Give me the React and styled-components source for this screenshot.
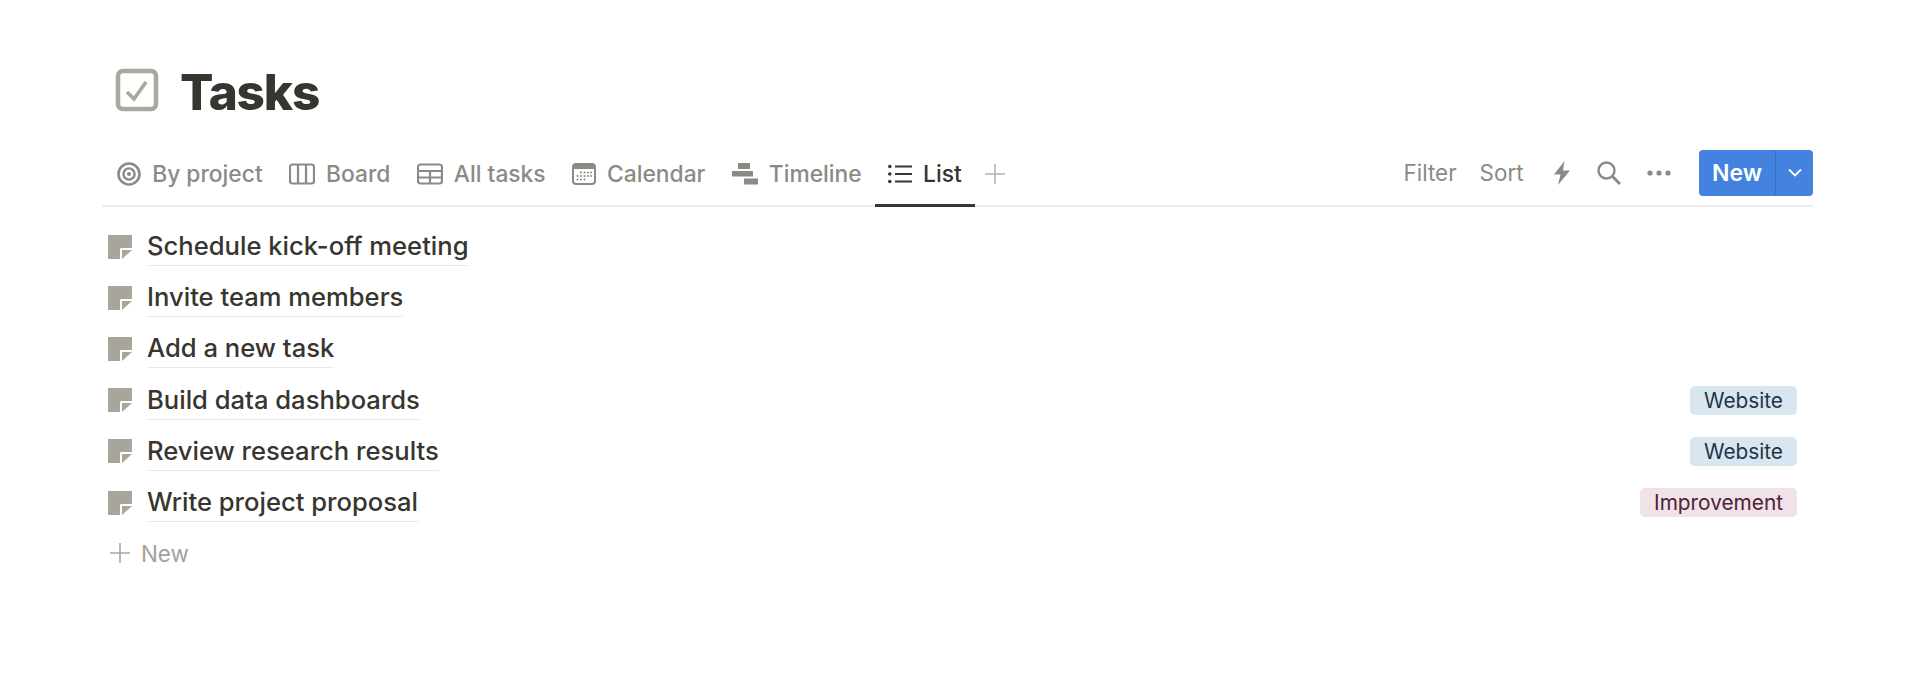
import styled, { createGlobalStyle } from "styled-components";

const GlobalStyle = createGlobalStyle`
  html, body {
    margin: 0;
    background: #fff;
    font-family: Inter, "Liberation Sans", sans-serif;
  }
`;

const tabs = [
  { label: "By project", icon: "target" },
  { label: "Board", icon: "board" },
  { label: "All tasks", icon: "table" },
  { label: "Calendar", icon: "calendar" },
  { label: "Timeline", icon: "timeline" },
  { label: "List", icon: "list", active: true },
];

const rows = [
  { title: "Schedule kick-off meeting" },
  { title: "Invite team members" },
  { title: "Add a new task" },
  { title: "Build data dashboards", tag: "Website", tone: "blue" },
  { title: "Review research results", tag: "Website", tone: "blue" },
  { title: "Write project proposal", tag: "Improvement", tone: "pink" },
];

const TabIcon = ({ name }) => {
  if (name === "target") {
    return (
      <svg width="24" height="24" viewBox="0 0 24 24" fill="none" stroke="currentColor">
        <circle cx="12" cy="12" r="10.5" strokeWidth="2.6" />
        <circle cx="12" cy="12" r="5.6" strokeWidth="2.4" />
        <circle cx="12" cy="12" r="2" fill="currentColor" stroke="none" />
      </svg>
    );
  }
  if (name === "board") {
    return (
      <svg width="26" height="22" viewBox="0 0 26 22" fill="none" stroke="currentColor" strokeWidth="2.2">
        <rect x="1" y="1.5" width="24" height="19" rx="2.5" />
        <path d="M9 1.5v19M17 1.5v19" />
      </svg>
    );
  }
  if (name === "table") {
    return (
      <svg width="26" height="22" viewBox="0 0 26 22" fill="none" stroke="currentColor" strokeWidth="2.2">
        <rect x="1" y="1.5" width="24" height="19" rx="2.5" />
        <path d="M1 8h24M1 14.5h24M13 8v12.5" />
      </svg>
    );
  }
  if (name === "calendar") {
    return (
      <svg width="24" height="22" viewBox="0 0 24 22">
        <rect x="1" y="1" width="22" height="20" rx="3" fill="none" stroke="currentColor" strokeWidth="2" />
        <path d="M1 6V4a3 3 0 0 1 3-3h16a3 3 0 0 1 3 3v2z" fill="currentColor" />
        <g fill="currentColor">
          <circle cx="9" cy="9.5" r="1" /><circle cx="12.5" cy="9.5" r="1" /><circle cx="16" cy="9.5" r="1" /><circle cx="19" cy="9.5" r="1" />
          <circle cx="5.5" cy="13" r="1" /><circle cx="9" cy="13" r="1" /><circle cx="12.5" cy="13" r="1" /><circle cx="16" cy="13" r="1" /><circle cx="19" cy="13" r="1" />
          <circle cx="5.5" cy="16.5" r="1" /><circle cx="9" cy="16.5" r="1" /><circle cx="12.5" cy="16.5" r="1" />
        </g>
      </svg>
    );
  }
  if (name === "timeline") {
    return (
      <svg width="26" height="22" viewBox="0 0 26 22" fill="currentColor">
        <rect x="6" y="0" width="12" height="6" rx="0.5" />
        <rect x="0" y="8" width="21" height="5.5" rx="0.5" />
        <rect x="12" y="15.5" width="14" height="6" rx="0.5" />
      </svg>
    );
  }
  return (
    <svg width="24" height="20" viewBox="0 0 24 20" fill="currentColor">
      <circle cx="1.8" cy="2.5" r="1.8" />
      <circle cx="1.8" cy="10" r="1.8" />
      <circle cx="1.8" cy="17.5" r="1.8" />
      <rect x="7" y="1.5" width="17" height="2" />
      <rect x="7" y="9" width="17" height="2" />
      <rect x="7" y="16.5" width="17" height="2" />
    </svg>
  );
};

const NoteIcon = () => (
  <svg width="24" height="24" viewBox="0 0 24 24">
    <path d="M0 0h24v13H13a1 1 0 0 0-1 1v10H0z" fill="#a8a59b" />
    <path d="M14 15h10L14 24z" fill="#a8a59b" />
  </svg>
);

const Plus = ({ size, color }) => (
  <svg width={size} height={size} viewBox="0 0 20 20" stroke={color} strokeWidth="1.6">
    <path d="M10 0v20M0 10h20" />
  </svg>
);

export default function App() {
  return (
    <Page>
      <GlobalStyle />
      <Header>
        <svg width="44" height="44" viewBox="0 0 44 44" fill="none">
          <rect x="3" y="3" width="38" height="38" rx="5" stroke="#aaa79e" strokeWidth="4.5" />
          <path d="M12 24l7 7 12-17" stroke="#aaa79e" strokeWidth="3.6" />
        </svg>
        <Title>Tasks</Title>
      </Header>

      <Toolbar>
        <TabList>
          {tabs.map((tab) => (
            <Tab key={tab.label} $active={tab.active}>
              <TabIcon name={tab.icon} />
              {tab.label}
            </Tab>
          ))}
          <AddView>
            <Plus size={20} color="#b4b3af" />
          </AddView>
        </TabList>

        <Actions>
          <TextActions>
            <ActionText>Filter</ActionText>
            <ActionText>Sort</ActionText>
          </TextActions>
          <BoltIcon width="18" height="24" viewBox="0 0 18 24" fill="#8b8a85">
            <path d="M11.5 0 1 13.5h6.5L5 24l12-14.5h-7z" />
          </BoltIcon>
          <SearchIcon width="24" height="24" viewBox="0 0 24 24" fill="none" stroke="#8b8a85">
            <circle cx="9.5" cy="9.5" r="8" strokeWidth="2.4" />
            <path d="M15.5 15.5 23 23" strokeWidth="3" />
          </SearchIcon>
          <svg width="24" height="6" viewBox="0 0 24 6" fill="#8b8a85">
            <circle cx="3" cy="3" r="2.6" />
            <circle cx="12" cy="3" r="2.6" />
            <circle cx="21" cy="3" r="2.6" />
          </svg>
          <NewButton>
            <NewLabel>New</NewLabel>
            <NewCaret>
              <svg width="14" height="9" viewBox="0 0 14 9" fill="none" stroke="#fff" strokeWidth="1.8">
                <path d="M1 1.5 7 7.5l6-6" />
              </svg>
            </NewCaret>
          </NewButton>
        </Actions>
      </Toolbar>

      <List>
        {rows.map((row) => (
          <Row key={row.title}>
            <NoteIcon />
            <RowTitle>{row.title}</RowTitle>
            {row.tag && <Tag $tone={row.tone}>{row.tag}</Tag>}
          </Row>
        ))}
        <NewRow>
          <Plus size={20} color="#a9a8a4" />
          New
        </NewRow>
      </List>
    </Page>
  );
}

const Page = styled.div`
  height: 679px;
  padding: 68px 107px 0 102px;
  box-sizing: border-box;
  overflow: hidden;
`;

const Header = styled.header`
  display: flex;
  align-items: center;
  gap: 21px;
  height: 44px;
  padding-left: 13px;
`;

const Title = styled.h1`
  margin: 0;
  padding-top: 3px;
  font-size: 49.5px;
  line-height: 44px;
  font-weight: 800;
  letter-spacing: -1.2px;
  color: #37352f;
`;

const Toolbar = styled.div`
  display: flex;
  justify-content: space-between;
  align-items: stretch;
  height: 56px;
  margin-top: 37px;
  border-bottom: 2px solid #ededec;
`;

const TabList = styled.div`
  display: flex;
  align-items: stretch;
  padding-left: 2px;
`;

const Tab = styled.div`
  display: flex;
  align-items: center;
  gap: 11px;
  padding: 0 13.2px 6px;
  margin-bottom: -2px;
  font-size: 22.8px;
  font-weight: 500;
  color: ${(p) => (p.$active ? "#37352f" : "#8b8a85")};
  border-bottom: ${(p) => (p.$active ? "3px solid #37352f" : "3px solid transparent")};
`;

const AddView = styled.div`
  display: flex;
  align-items: center;
  padding: 0 0 6px 10px;
`;

const Actions = styled.div`
  display: flex;
  align-items: center;
  gap: 27px;
  padding-bottom: 9px;
`;

const TextActions = styled.div`
  display: flex;
  gap: 23px;
`;

const BoltIcon = styled.svg`
  margin: 0 -0.5px 0 2px;
`;

const SearchIcon = styled.svg`
  margin-right: -1px;
`;

const ActionText = styled.span`
  font-size: 22.4px;
  color: #8b8a85;
`;

const NewButton = styled.div`
  display: flex;
  height: 46px;
  margin-left: 1px;
  background: #4382de;
  border-radius: 4px;
  color: #fff;
`;

const NewLabel = styled.span`
  display: flex;
  align-items: center;
  justify-content: center;
  width: 76px;
  font-size: 23px;
  font-weight: 600;
  border-right: 1px solid #3a72c4;
`;

const NewCaret = styled.span`
  display: flex;
  align-items: center;
  justify-content: center;
  width: 37px;
`;

const List = styled.div`
  display: flex;
  flex-direction: column;
  padding-top: 14px;
`;

const Row = styled.div`
  display: flex;
  align-items: center;
  height: 51.2px;
  padding: 0 16px 0 6px;
  gap: 15px;
`;

const RowTitle = styled.span`
  font-size: 25.6px;
  font-weight: 500;
  line-height: 38px;
  color: #37352f;
  border-bottom: 1.5px solid #e9e9e7;
  margin-right: auto;
`;

const Tag = styled.span`
  display: flex;
  align-items: center;
  height: 29px;
  padding: 0 14px;
  border-radius: 5px;
  font-size: 20.8px;
  background: ${(p) => (p.$tone === "pink" ? "#f1e1e8" : "#d8e6ef")};
  color: ${(p) => (p.$tone === "pink" ? "#4c2337" : "#1f3448")};
`;

const NewRow = styled.div`
  display: flex;
  align-items: center;
  gap: 11px;
  height: 50px;
  padding-left: 8px;
  font-size: 22.4px;
  color: #a3a29e;
`;
